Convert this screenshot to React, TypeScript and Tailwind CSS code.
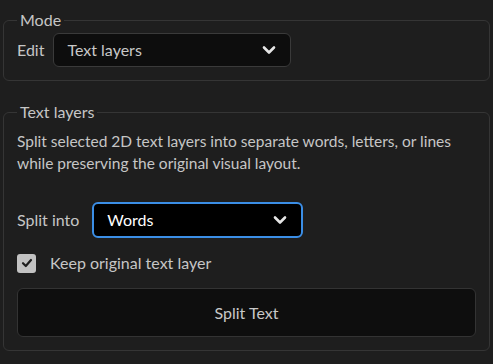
import React from "react";

const font = { fontFamily: '"Lato", "Liberation Sans", sans-serif' };

const Chevron = () => (
  <svg width="16" height="16" viewBox="0 0 16 16" fill="none" className="shrink-0">
    <path d="M3 5.5 L8 10.5 L13 5.5" stroke="#e6e6e6" strokeWidth="2.6" strokeLinecap="round" strokeLinejoin="round" />
  </svg>
);

const Select: React.FC<{ value: string; focused?: boolean; className?: string }> = ({ value, focused, className = "" }) => (
  <div
    className={`flex items-center justify-between rounded-md px-[13px] ${
      focused ? "border-2 border-[#3b8ee6] bg-black text-white" : "border border-[#3a3a3a] bg-[#0d0d0d] text-[#c8c8c8]"
    } ${className}`}
  >
    <span className="text-[16px]">{value}</span>
    <Chevron />
  </div>
);

export default function App() {
  return (
    <div className="min-h-screen w-full bg-[#1e1e1e] px-[3px] pt-[10px] text-[#c6c6c6]" style={font}>
      <fieldset className="rounded-md border border-[#353535] px-[13px] pb-[13px] pt-[3px]">
        <legend className="px-[3px] text-[16px] leading-[20px]">Mode</legend>
        <div className="flex items-center gap-[9px]">
          <span className="text-[16px]">Edit</span>
          <Select value="Text layers" className="h-[34px] w-[238px]" />
        </div>
      </fieldset>

      <fieldset className="mt-[21px] rounded-md border border-[#353535] px-[13px] pb-[13px] pt-[8px]">
        <legend className="px-[3px] text-[16px] leading-[20px]">Text layers</legend>
        <p className="text-[15.5px] leading-[22px]">
          Split selected 2D text layers into separate words, letters, or lines while preserving the original visual layout.
        </p>
        <div className="mt-[28px] flex items-center gap-[13px]">
          <span className="text-[16px]">Split into</span>
          <Select value="Words" focused className="h-[36px] w-[211px]" />
        </div>
        <div className="mt-[13px] flex items-center gap-[14px]">
          <div className="flex h-[19px] w-[19px] items-center justify-center rounded-[3px] bg-[#c2c2c2]">
            <svg width="12" height="12" viewBox="0 0 12 12" fill="none">
              <path d="M2 6.2 L4.8 9 L10 3" stroke="#1e1e1e" strokeWidth="2.2" strokeLinecap="round" strokeLinejoin="round" />
            </svg>
          </div>
          <span className="text-[16px]">Keep original text layer</span>
        </div>
        <button className="mt-[13px] flex h-[49px] w-full items-center justify-center rounded-md border border-[#333333] bg-[#0e0e0e] text-[16px] text-[#c8c8c8]">
          Split Text
        </button>
      </fieldset>
    </div>
  );
}
